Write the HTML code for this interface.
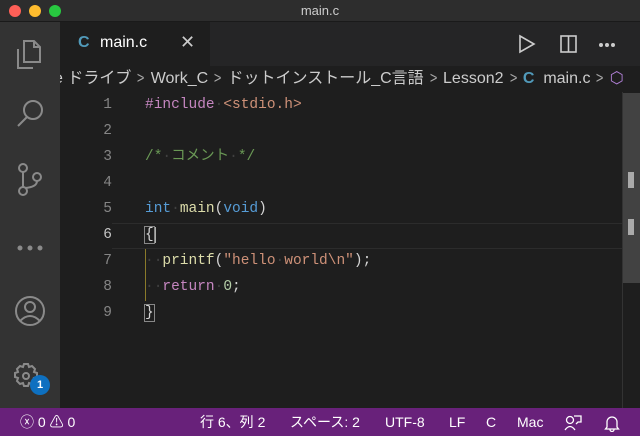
<!DOCTYPE html>
<html><head><meta charset="utf-8"><style>
*{margin:0;padding:0;box-sizing:border-box}
body{width:640px;height:436px;overflow:hidden;background:#1e1e1e;font-family:"Liberation Sans","Noto Sans CJK JP",sans-serif;position:relative}
.title{position:absolute;left:0;top:0;width:640px;height:22px;background:#2d2d2d;color:#ccc;font-size:13px;text-align:center;line-height:22px;border-bottom:1px solid #1a1a1a}
.dot{position:absolute;top:5px;width:12px;height:12px;border-radius:50%}
.act{position:absolute;left:0;top:22px;width:60px;height:386px;background:#333}
.tabs{position:absolute;left:60px;top:22px;width:580px;height:44px;background:#252526}
.tab{position:absolute;left:0;top:0;width:150px;height:44px;background:#1e1e1e;color:#fff;font-size:16px}
.bc{position:absolute;left:60px;top:66px;width:580px;height:26px;color:#ccc;font-size:16px;line-height:26px;white-space:nowrap;overflow:hidden}
.bc i{font-style:normal;display:inline-block;margin:0 5px;color:#aaa;transform:scaleX(0.8)}
.code{position:absolute;left:0;top:92px;font-family:"Liberation Mono","Noto Sans CJK JP",monospace;font-size:14.5px}
.ln{position:absolute;left:60px;width:52px;text-align:right;color:#858585;height:26px;line-height:26px}
.cl{position:absolute;left:145px;height:26px;line-height:26px;white-space:pre;color:#d4d4d4}
.w{color:#404040}
.status{position:absolute;left:0;top:408px;width:640px;height:28px;background:#68217a;color:#fff;font-size:14px;line-height:28px}
.status span{position:absolute;top:0}
</style></head><body>
<div class="title">main.c</div>
<div class="dot" style="left:9px;background:#fe5f57"></div>
<div class="dot" style="left:29px;background:#febc2e"></div>
<div class="dot" style="left:49px;background:#28c840"></div>
<div class="act">
<svg width="60" height="386" fill="none" stroke="#8a8a8a" stroke-width="2">
<path d="M24 19h10l6 6v15H24z M34 19v6h6 M18 27v19h15"/>
<circle cx="33" cy="88" r="9"/><path d="M27 95l-9 9"/>
<circle cx="23" cy="146" r="4"/><circle cx="23" cy="169" r="4"/><circle cx="37" cy="155" r="4"/><path d="M23 150v15M37 159q0 6-12 7"/>
<circle cx="20" cy="226" r="1.5" fill="#8a8a8a"/><circle cx="30" cy="226" r="1.5" fill="#8a8a8a"/><circle cx="40" cy="226" r="1.5" fill="#8a8a8a"/>
<circle cx="30" cy="289" r="14"/><circle cx="30" cy="285" r="5"/><path d="M20 299q10-10 20 0"/>
<path d="M24 342h4l1 3 3-1 3 3-1 3 3 1v4l-3 1 1 3-3 3-3-1-1 3h-4l-1-3-3 1-3-3 1-3-3-1v-4l3-1-1-3 3-3 3 1z"/><circle cx="26" cy="354" r="3"/>
</svg>
<div style="position:absolute;left:30px;top:353px;width:20px;height:20px;border-radius:50%;background:#0e70c0;color:#fff;font-size:11px;font-weight:bold;text-align:center;line-height:20px">1</div>
</div>
<div class="tabs">
<div class="tab"><span style="position:absolute;left:18px;top:12px;color:#519aba;font-weight:bold">C</span><span style="position:absolute;left:40px;top:12px">main.c</span><span style="position:absolute;left:120px;top:10px;font-size:18px;color:#ccc">✕</span></div>
<svg style="position:absolute;left:450px;top:10px" width="130" height="24" fill="none" stroke="#ccc" stroke-width="1.6">
<path d="M10 4l14 8-14 8z"/><rect x="51" y="4" width="15" height="16"/><path d="M58.5 4v16"/>
<circle cx="91" cy="13" r="1.2" fill="#ccc"/><circle cx="97" cy="13" r="1.2" fill="#ccc"/><circle cx="103" cy="13" r="1.2" fill="#ccc"/>
</svg>
</div>
<div class="bc"><span style="margin-left:-6px">e ドライブ<i>&gt;</i>Work_C<i>&gt;</i>ドットインストール_C言語<i>&gt;</i>Lesson2<i>&gt;</i><b style="color:#519aba">C</b>&nbsp; main.c<i>&gt;</i><span style="color:#b180d7">⬡</span></span></div>
<div style="position:absolute;left:622px;top:92px;width:18px;height:316px;background:#1e1e1e;border-left:1px solid #333"></div>
<div style="position:absolute;left:623px;top:93px;width:17px;height:190px;background:#424242"></div>
<div style="position:absolute;left:628px;top:172px;width:6px;height:16px;background:#aaa"></div>
<div style="position:absolute;left:628px;top:219px;width:6px;height:16px;background:#aaa"></div>
<div style="position:absolute;left:112px;top:223px;width:510px;height:26px;border-top:1px solid #2c2c2c;border-bottom:1px solid #2c2c2c"></div>
<div class="code">
<div class="ln" style="top:0">1</div><div class="cl" style="top:0"><span style="color:#c586c0">#include</span><span class="w">·</span><span style="color:#ce9178">&lt;stdio.h&gt;</span></div>
<div class="ln" style="top:26px">2</div>
<div class="ln" style="top:52px">3</div><div class="cl" style="top:52px;color:#6a9955">/*<span class="w">·</span>コメント<span class="w">·</span>*/</div>
<div class="ln" style="top:78px">4</div>
<div class="ln" style="top:104px">5</div><div class="cl" style="top:104px"><span style="color:#569cd6">int</span><span class="w">·</span><span style="color:#dcdcaa">main</span>(<span style="color:#569cd6">void</span>)</div>
<div class="ln" style="top:130px;color:#c6c6c6">6</div><div class="cl" style="top:130px"><span style="outline:1px solid #888;">{</span><span style="border-left:2px solid #aeafad"></span></div>
<div class="ln" style="top:156px">7</div><div class="cl" style="top:156px"><span class="w">··</span><span style="color:#dcdcaa">printf</span>(<span style="color:#ce9178">"hello<span class="w">·</span>world\n"</span>);</div>
<div class="ln" style="top:182px">8</div><div class="cl" style="top:182px"><span class="w">··</span><span style="color:#c586c0">return</span><span class="w">·</span><span style="color:#b5cea8">0</span>;</div>
<div class="ln" style="top:208px">9</div><div class="cl" style="top:208px"><span style="outline:1px solid #888">}</span></div>
<div style="position:absolute;left:145px;top:157px;width:1px;height:52px;background:#8a7a2a"></div>
</div>
<div class="status">
<span style="left:20px">ⓧ 0 ⚠ 0</span>
<span style="left:200px">行 6、列 2</span>
<span style="left:290px">スペース: 2</span>
<span style="left:385px">UTF-8</span>
<span style="left:449px">LF</span>
<span style="left:486px">C</span>
<span style="left:517px">Mac</span>
<svg style="position:absolute;left:564px;top:6px" width="60" height="18" fill="none" stroke="#fff" stroke-width="1.3">
<circle cx="6" cy="6" r="3.5"/><path d="M1 16q5-7 10 0M10 2h7v6h-3l-2 2"/>
<path d="M43 13V8a5 5 0 0 1 10 0v5l1.5 2h-13z M46 15.5a2 2 0 0 0 4 0"/>
</svg>
</div>
</body></html>
